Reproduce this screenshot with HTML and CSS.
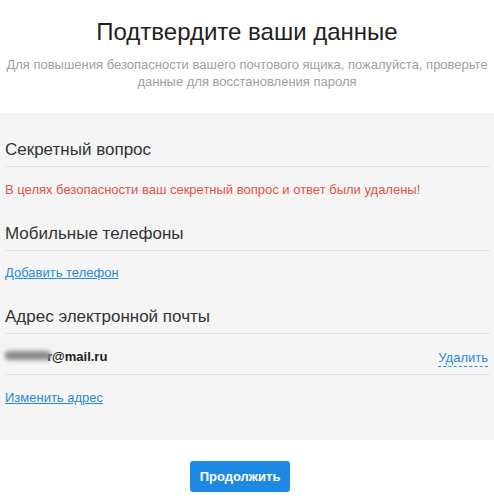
FILE: index.html
```html
<!DOCTYPE html>
<html lang="ru">
<head>
  <meta charset="UTF-8">
  <title>Подтвердите ваши данные</title>
  <link rel="stylesheet" href="styles.css">
</head>
<body>

  <div class="header">
    <h1 class="title">Подтвердите ваши данные</h1>
    <p class="subtitle">Для повышения безопасности вашего почтового ящика, пожалуйста, проверьте данные для восстановления пароля</p>
  </div>

  <div class="panel">
    <h2 class="section-title">Секретный вопрос</h2>
    <p class="warning">В целях безопасности ваш секретный вопрос и ответ были удалены!</p>

    <h2 class="section-title">Мобильные телефоны</h2>
    <a class="link" href="#">Добавить телефон</a>

    <h2 class="section-title">Адрес электронной почты</h2>
    <div class="email-row">
      <span class="email"><span class="hidden-part"></span>r@mail.ru</span>
      <a class="link-dashed" href="#">Удалить</a>
    </div>
    <a class="link" href="#">Изменить адрес</a>
  </div>

  <div class="footer">
    <button class="btn-continue">Продолжить</button>
  </div>

</body>
</html>
```

FILE: styles.css
```css
body {
  margin: 0;
  padding: 0;
  background: #fff;
  font-family: "Liberation Sans", Arial, sans-serif;
  color: #333;
}

.header {
  text-align: center;
  padding: 18px 4px 0;
  height: 95px;
}

.title {
  margin: 0;
  font-size: 24px;
  font-weight: normal;
  color: #222;
  line-height: 28px;
}

.subtitle {
  margin: 10px 0 0;
  font-size: 13px;
  line-height: 17px;
  color: #a0a0a0;
}

.panel {
  background: #f5f5f5;
  padding: 27px 4px 34px 5px;
}

.section-title {
  margin: 0;
  font-size: 17px;
  font-weight: normal;
  color: #333;
  line-height: 20px;
  padding-bottom: 6px;
  border-bottom: 1px solid #e3e3e3;
}

.warning {
  margin: 14px 0 26px;
  font-size: 13px;
  line-height: 17px;
  color: #e0524a;
}

.link {
  display: block;
  font-size: 13px;
  line-height: 17px;
  color: #2a8ad6;
  text-decoration: underline;
  margin: 13px 0 26px;
}

.link:last-child {
  margin-bottom: 0;
}

.email-row {
  display: flex;
  justify-content: space-between;
  align-items: flex-end;
  padding: 14px 2px 9px 0;
  border-bottom: 1px solid #e3e3e3;
}

.email {
  font-size: 13px;
  font-weight: bold;
  color: #222;
  line-height: 17px;
}

.hidden-part {
  display: inline-block;
  width: 46px;
  height: 9px;
  margin-right: -4px;
  background: #8a8a8a;
  border-radius: 4px;
  filter: blur(2px);
  vertical-align: 1px;
}

.link-dashed {
  font-size: 13px;
  line-height: 17px;
  color: #2a8ad6;
  text-decoration: none;
  border-bottom: 1px dashed #2a8ad6;
  margin-bottom: -2px;
}

.email-row + .link {
  margin-top: 14px;
}

.footer {
  display: flex;
  justify-content: center;
  padding: 21px 14px 0 0;
}

.btn-continue {
  background: #1e88e5;
  color: #fff;
  border: none;
  border-radius: 3px;
  font-family: "Liberation Sans", Arial, sans-serif;
  font-size: 13px;
  font-weight: bold;
  width: 100px;
  height: 31px;
  cursor: pointer;
}
```
